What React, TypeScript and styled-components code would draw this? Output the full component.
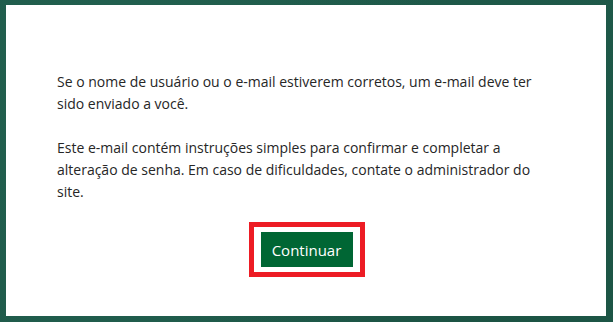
import styled, { createGlobalStyle } from 'styled-components';

const GlobalStyle = createGlobalStyle`
  html, body {
    margin: 0;
    padding: 0;
    background: #1f5a4a;
  }
  body {
    font-family: 'Open Sans', 'Noto Sans', sans-serif;
  }
`;

const Page = styled.div`
  width: 613px;
  height: 322px;
  box-sizing: border-box;
  padding: 5px 7px 6px 6px;
  background:
    radial-gradient(circle at 20% 30%, rgba(40, 110, 90, 0.35), transparent 60%),
    radial-gradient(circle at 80% 80%, rgba(20, 70, 55, 0.4), transparent 60%),
    #1f5a4a;
`;

const Panel = styled.div`
  height: 100%;
  background: #ffffff;
  box-sizing: border-box;
  padding: 66px 50px 0 51px;
  display: flex;
  flex-direction: column;
`;

const Message = styled.p`
  margin: 0 0 22px;
  font-size: 14px;
  line-height: 22px;
  color: #262626;
`;

const Actions = styled.div`
  display: flex;
  justify-content: center;
  margin-top: -3px;
`;

const Highlight = styled.div`
  border: 5px solid #ed1c24;
  padding: 5px 7px;
`;

const Button = styled.button`
  width: 92px;
  height: 35px;
  border: none;
  background: #006634;
  color: #ffffff;
  font-family: 'Open Sans', 'Noto Sans', sans-serif;
  font-size: 15px;
  cursor: pointer;
  padding: 0;
`;

export default function App() {
  return (
    <>
      <GlobalStyle />
      <Page>
        <Panel>
          <Message>
            Se o nome de usuário ou o e-mail estiverem corretos, um e-mail deve ter sido enviado a você.
          </Message>
          <Message>
            Este e-mail contém instruções simples para confirmar e completar a alteração de senha. Em caso de
            dificuldades, contate o administrador do site.
          </Message>
          <Actions>
            <Highlight>
              <Button type="button">Continuar</Button>
            </Highlight>
          </Actions>
        </Panel>
      </Page>
    </>
  );
}
